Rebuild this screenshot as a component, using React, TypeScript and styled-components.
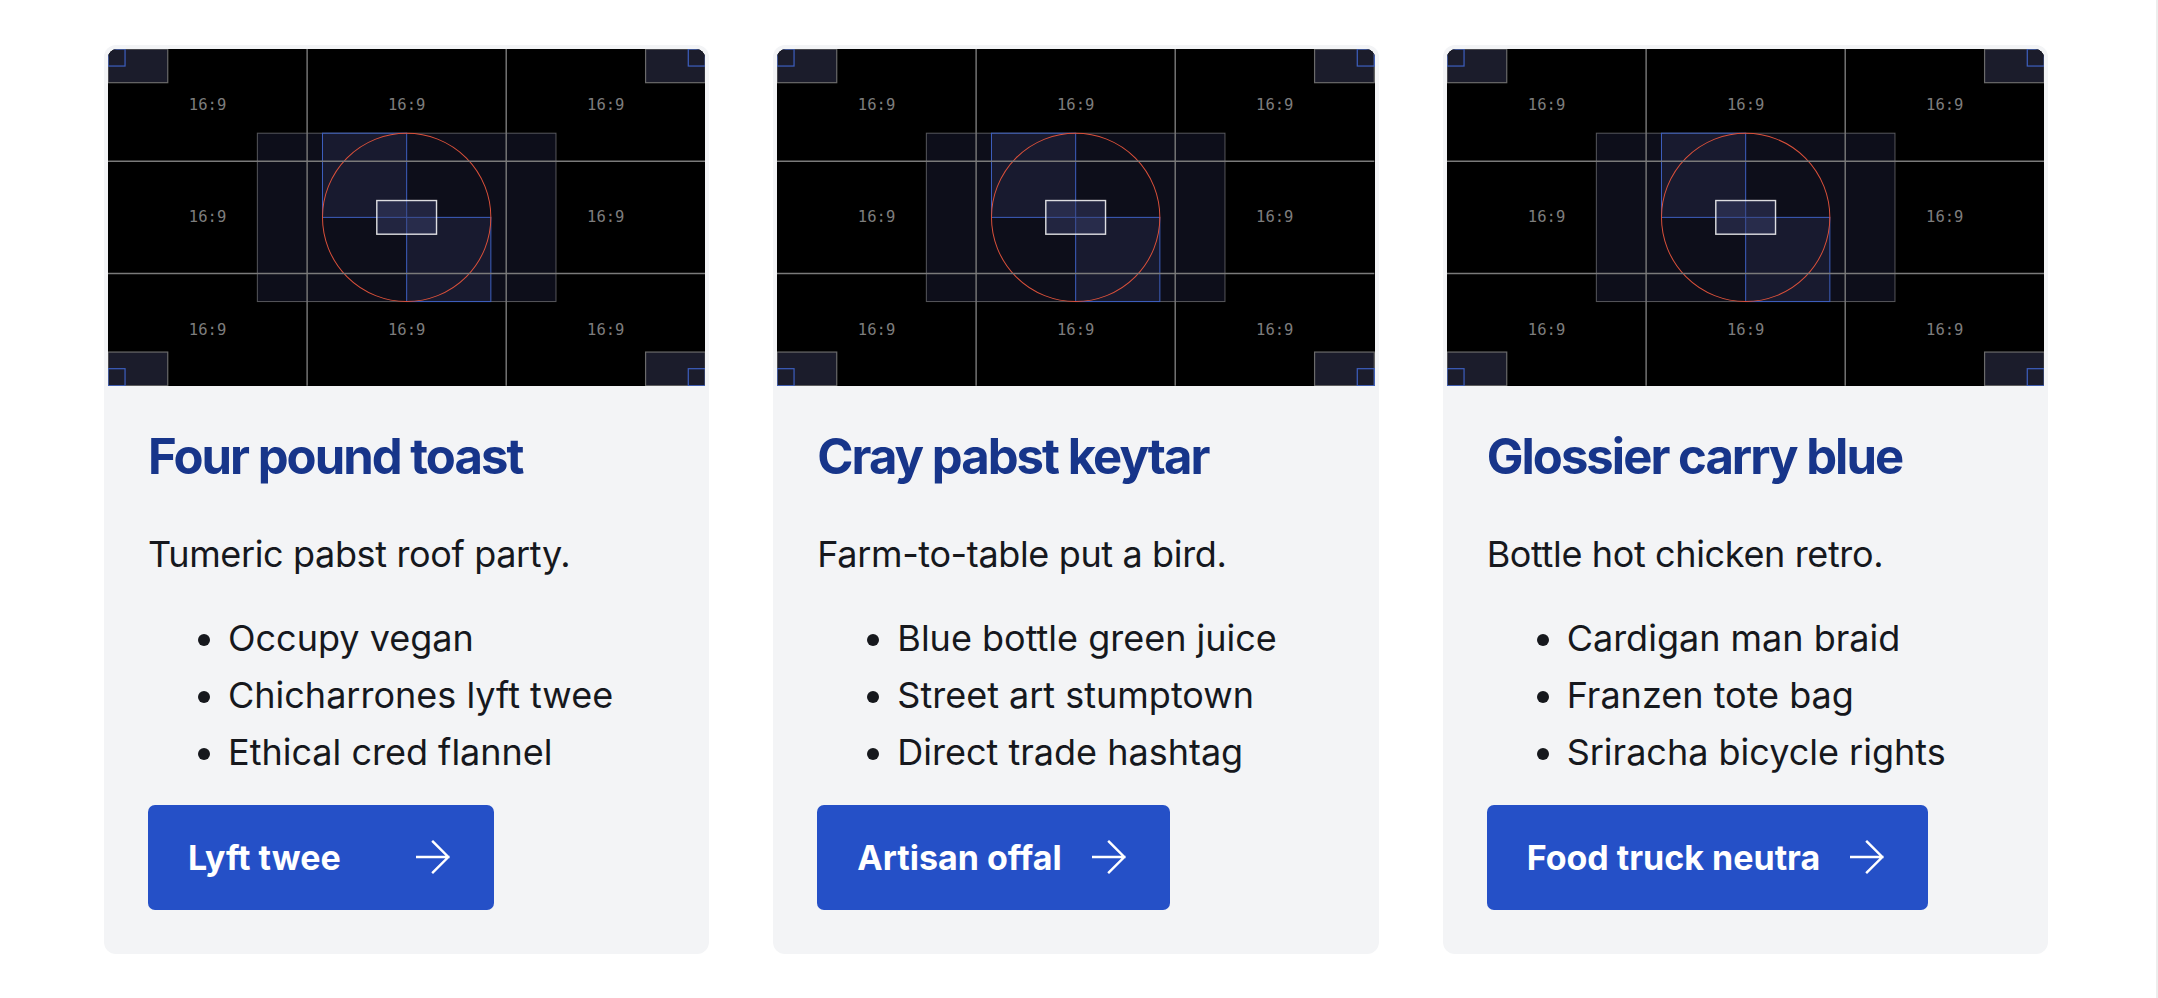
import styled, { createGlobalStyle } from 'styled-components';

const GlobalStyle = createGlobalStyle`
    html, body {
        margin: 0;
        padding: 0;
        background: #ffffff;
    }
    body {
        font-family: Inter, "Noto Sans", "Liberation Sans", sans-serif;
        color: #16181d;
    }
`;

type Feature = {
    title: string;
    lead: string;
    points: string[];
    action: string;
};

const features: Feature[] = [
    {
        title: 'Four pound toast',
        lead: 'Tumeric pabst roof party.',
        points: ['Occupy vegan', 'Chicharrones lyft twee', 'Ethical cred flannel'],
        action: 'Lyft twee',
    },
    {
        title: 'Cray pabst keytar',
        lead: 'Farm-to-table put a bird.',
        points: ['Blue bottle green juice', 'Street art stumptown', 'Direct trade hashtag'],
        action: 'Artisan offal',
    },
    {
        title: 'Glossier carry blue',
        lead: 'Bottle hot chicken retro.',
        points: ['Cardigan man braid', 'Franzen tote bag', 'Sriracha bicycle rights'],
        action: 'Food truck neutra',
    },
];

const Page = styled.div`
    min-height: 100vh;
    box-sizing: border-box;
    padding: 45px 0 45px 104px;
    border-right: 2px solid #ededed;
`;

const CardGrid = styled.div`
    display: grid;
    grid-template-columns: repeat(3, 1fr);
    gap: 64px;
    width: 1944px;
`;

const Card = styled.article`
    display: flex;
    flex-direction: column;
    background: #f3f4f6;
    border-radius: 12px;
    padding: 4px;
`;

const Media = styled.div`
    border-radius: 9px 9px 0 0;
    overflow: hidden;
    background: #000;
    & svg {
        display: block;
        width: 100%;
        height: auto;
    }
`;

const Body = styled.div`
    display: flex;
    flex-direction: column;
    align-items: flex-start;
    padding: 41px 40px 40px;
`;

const Title = styled.h2`
    margin: 0;
    font-size: 49px;
    line-height: 60px;
    font-weight: 700;
    letter-spacing: -0.04em;
    color: #17358a;
`;

const Lead = styled.p`
    margin: 39px 0 0;
    font-size: 36px;
    line-height: 57px;
    letter-spacing: -0.01em;
`;

const Points = styled.ul`
    margin: 27px 0 0;
    padding-left: 80px;
    font-size: 36px;
    line-height: 57px;
`;

const ActionButton = styled.a`
    margin-top: 24px;
    display: flex;
    align-items: center;
    justify-content: space-between;
    gap: 30px;
    box-sizing: border-box;
    min-width: 346px;
    height: 105px;
    padding: 0 44px 0 40px;
    border-radius: 7px;
    background: #2550c7;
    color: #fff;
    font-size: 34px;
    font-weight: 700;
    text-decoration: none;
`;

const W = 596;
const H = 336;
const cols = [W / 6, W / 2, (W * 5) / 6];
const rows = [H / 6, H / 2, (H * 5) / 6];

const Placeholder = () => {
    const cw = W / 10;
    const ch = H / 10;
    const s = 17;
    const r = H / 4;
    const cx = W / 2;
    const cy = H / 2;
    const corners = [
        { x: 0, y: 0, bx: 0, by: 0 },
        { x: W - cw, y: 0, bx: W - s, by: 0 },
        { x: 0, y: H - ch, bx: 0, by: H - s },
        { x: W - cw, y: H - ch, bx: W - s, by: H - s },
    ];
    // the middle cell has no label, the centre box sits there
    const labels = rows.flatMap((y) => cols.map((x) => ({ x, y }))).filter((p) => !(p.x === cx && p.y === cy));
    return (
        <svg viewBox={`0 0 ${W} ${H}`} xmlns="http://www.w3.org/2000/svg">
            <rect width={W} height={H} fill="#000" />
            <rect x={W / 4} y={H / 4} width={W / 2} height={H / 2} fill="rgba(40,44,80,0.32)" stroke="rgba(255,255,255,0.32)" strokeWidth="1" />
            <rect x={cx - r} y={cy - r} width={r} height={r} fill="rgba(60,64,110,0.25)" stroke="#3d5fbf" strokeWidth="1" />
            <rect x={cx} y={cy} width={r} height={r} fill="rgba(60,64,110,0.25)" stroke="#3d5fbf" strokeWidth="1" />
            <circle cx={cx} cy={cy} r={r} fill="none" stroke="#d9503a" strokeWidth="1" />
            {[W / 3, (W * 2) / 3].map((x) => (
                <line key={x} x1={x} y1={0} x2={x} y2={H} stroke="#7a7a7a" strokeWidth="1.4" />
            ))}
            {[H / 3, (H * 2) / 3].map((y) => (
                <line key={y} x1={0} y1={y} x2={W} y2={y} stroke="#7a7a7a" strokeWidth="1.4" />
            ))}
            <rect x={cx - cw / 2} y={cy - ch / 2} width={cw} height={ch} fill="rgba(60,66,110,0.45)" stroke="rgba(255,255,255,0.85)" strokeWidth="1.4" />
            {corners.map((c, i) => (
                <g key={i}>
                    <rect x={c.x} y={c.y} width={cw} height={ch} fill="#1b1c2b" stroke="#6a6a6a" strokeWidth="1.2" />
                    <rect x={c.bx} y={c.by} width={s} height={s} fill="none" stroke="#3d5fbf" strokeWidth="1.2" />
                </g>
            ))}
            {labels.map((p) => (
                <text
                    key={`${p.x}-${p.y}`}
                    x={p.x}
                    y={p.y}
                    fill="#7d7d7d"
                    fontSize="15.5"
                    fontFamily='"DejaVu Sans Mono", "Liberation Mono", monospace'
                    textAnchor="middle"
                    dominantBaseline="central"
                >
                    16:9
                </text>
            ))}
        </svg>
    );
};

const ArrowIcon = () => (
    <svg width="34" height="34" viewBox="0 0 14 14" fill="none" stroke="currentColor" strokeWidth="1" strokeLinecap="square">
        <path d="M0.5 7h12.8M7 0.7l6.3 6.3L7 13.3" />
    </svg>
);

export default function App() {
    return (
        <>
            <GlobalStyle />
            <Page>
                <CardGrid>
                    {features.map((f) => (
                        <Card key={f.title}>
                            <Media>
                                <Placeholder />
                            </Media>
                            <Body>
                                <Title>{f.title}</Title>
                                <Lead>{f.lead}</Lead>
                                <Points>
                                    {f.points.map((p) => (
                                        <li key={p}>{p}</li>
                                    ))}
                                </Points>
                                <ActionButton href="#">
                                    <span>{f.action}</span>
                                    <ArrowIcon />
                                </ActionButton>
                            </Body>
                        </Card>
                    ))}
                </CardGrid>
            </Page>
        </>
    );
}
